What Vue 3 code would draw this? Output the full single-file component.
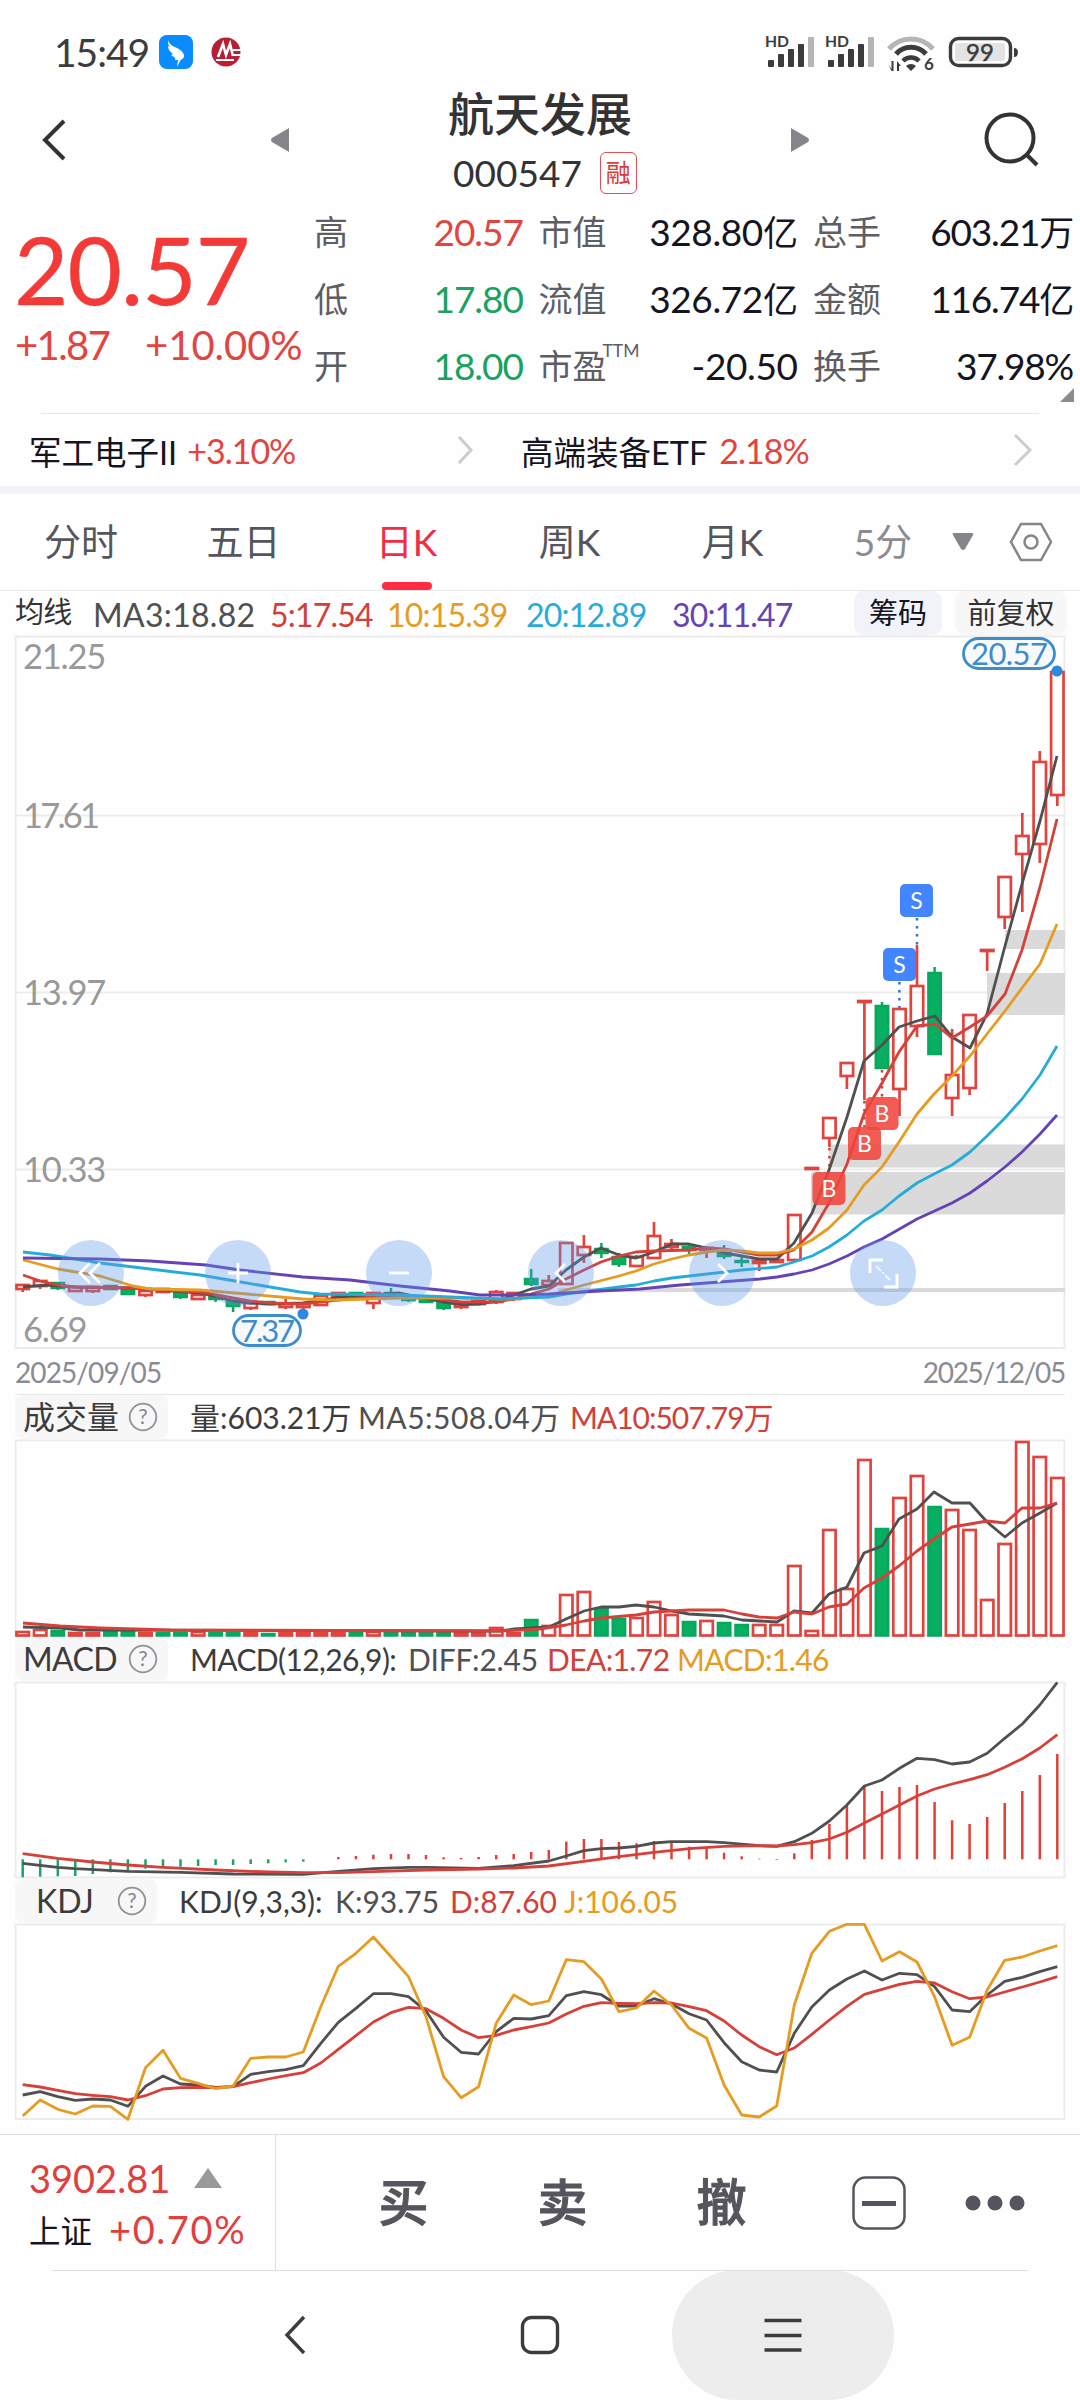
<script setup>
const quotes = [
  { label: "高", value: "20.57", tone: "up" },
  { label: "市值", value: "328.80", unit: "亿" },
  { label: "总手", value: "603.21", unit: "万", tight: true },
  { label: "低", value: "17.80", tone: "down", tight: true },
  { label: "流值", value: "326.72", unit: "亿" },
  { label: "金额", value: "116.74", unit: "亿", tight: true },
  { label: "开", value: "18.00", tone: "down" },
  { label: "市盈", sup: "TTM", value: "-20.50" },
  { label: "换手", value: "37.98%", tight: true }
];

const tabs = ["分时", "五日", "日K", "周K", "月K"];

// x position of the nth trading day
const cx = (i) => +(22.7 + i * 17.536).toFixed(1);

// [x, y] pairs to a polyline
const line = (pts) => pts.map(([x, y]) => `${x},${y}`).join(" ");
const series = (ys) => ys.map((y, i) => `${cx(i)},${y}`).join(" ");
const scaled = (pts, base) =>
  pts.map(([i, y]) => `${cx(i)},${(base + y / 3).toFixed(1)}`).join(" ");

// high, body top, body bottom, low, color
const candles = [
  [1285, 1285, 1289, 1292, "r"], [1281, 1281, 1286, 1289, "r"], [1282, 1283, 1288, 1290, "g"],
  [1287, 1287, 1291, 1292, "r"], [1287, 1287, 1291, 1293, "r"], [1285, 1286, 1289, 1289, "g"],
  [1290, 1290, 1294, 1295, "g"], [1291, 1291, 1295, 1297, "r"], [1289, 1289, 1292, 1292, "r"],
  [1293, 1293, 1297, 1299, "g"], [1295, 1295, 1299, 1300, "r"], [1296, 1296, 1299, 1302, "g"],
  [1301, 1301, 1306, 1312, "g"], [1303, 1303, 1308, 1310, "r"], [1301, 1302, 1304, 1304, "g"],
  [1299, 1304, 1307, 1309, "r"], [1303, 1304, 1307, 1310, "r"], [1296, 1296, 1305, 1305, "r"],
  [1293, 1293, 1296, 1296, "r"], [1292, 1293, 1296, 1296, "g"], [1293, 1293, 1303, 1309, "r"],
  [1288, 1293, 1296, 1297, "g"], [1296, 1297, 1300, 1302, "g"], [1298, 1298, 1302, 1303, "g"],
  [1302, 1302, 1308, 1310, "g"], [1303, 1304, 1307, 1309, "r"], [1300, 1301, 1304, 1304, "r"],
  [1290, 1292, 1302, 1304, "r"], [1292, 1293, 1299, 1301, "r"], [1269, 1279, 1284, 1286, "g"],
  [1275, 1281, 1285, 1286, "r"], [1242, 1243, 1284, 1284, "r"], [1235, 1247, 1255, 1263, "r"],
  [1243, 1249, 1253, 1258, "g"], [1253, 1257, 1264, 1267, "g"], [1255, 1257, 1266, 1266, "r"],
  [1222, 1236, 1258, 1258, "r"], [1239, 1244, 1247, 1250, "r"], [1245, 1247, 1250, 1254, "g"],
  [1247, 1248, 1250, 1258, "r"], [1245, 1253, 1256, 1259, "g"], [1257, 1261, 1262, 1267, "g"],
  [1259, 1261, 1263, 1271, "r"], [1259, 1260, 1262, 1263, "r"], [1214, 1215, 1260, 1260, "r"],
  [1168, 1168, 1169, 1169, "r"], [1118, 1118, 1138, 1147, "r"], [1062, 1063, 1076, 1089, "r"],
  [1001, 1001, 1002, 1100, "r"], [1002, 1006, 1068, 1069, "g"], [1008, 1009, 1089, 1116, "r"],
  [945, 986, 1026, 1037, "r"], [967, 973, 1054, 1055, "g"], [1029, 1075, 1098, 1116, "r"],
  [1015, 1015, 1088, 1095, "r"], [949, 950, 951, 971, "r"], [876, 877, 917, 929, "r"],
  [813, 836, 854, 912, "r"], [751, 762, 844, 863, "r"], [671, 672, 795, 806, "r"]
];

const gaps = [
  [1005, 930, 19],
  [987, 973, 42],
  [829, 1144.5, 23],
  [811, 1172, 42.5],
  [558, 1288, 4]
];

const ma3 = [
  [23, 1287], [46, 1285], [75, 1287], [133, 1288], [200, 1293], [217, 1297], [233, 1301], [250, 1303],
  [270, 1304], [303, 1303], [320, 1301], [338, 1297], [373, 1295], [400, 1293], [423, 1298], [443, 1302],
  [461, 1304.5], [479, 1304], [496, 1301], [514, 1295], [531, 1289], [549, 1286], [566, 1270], [584, 1257],
  [601, 1248], [619, 1255], [636, 1258], [654, 1252], [672, 1244], [689, 1244], [707, 1248], [724, 1253],
  [742, 1256], [759, 1259], [777, 1259], [794, 1243], [812, 1213], [829, 1170], [847, 1117], [864, 1061],
  [882, 1045], [899, 1027], [917, 1021], [935, 1016], [952, 1037], [970, 1048], [987, 1014], [1005, 946],
  [1022, 884], [1040, 821], [1057, 756]
];
const ma5 = [
  [23, 1275], [40, 1281], [58, 1285], [75, 1287], [133, 1288], [200, 1292], [233, 1298], [250, 1301],
  [270, 1303], [303, 1304], [320, 1302], [338, 1300], [373, 1297], [400, 1295], [423, 1297], [461, 1302],
  [496, 1302], [514, 1299], [531, 1294], [549, 1289], [566, 1279], [584, 1270], [601, 1262], [619, 1256],
  [636, 1252], [654, 1251], [689, 1250], [707, 1248], [724, 1249], [742, 1252], [759, 1255], [777, 1255],
  [794, 1250], [812, 1232], [829, 1203], [847, 1164], [864, 1114], [882, 1083], [899, 1052], [917, 1026],
  [935, 1024], [952, 1038], [970, 1027], [987, 1016], [1005, 994], [1022, 950], [1040, 887], [1057, 819]
];
const ma10 = [
  [23, 1260], [58, 1269], [100, 1276], [133, 1286], [150, 1289], [200, 1290], [247, 1294], [303, 1299],
  [335, 1300], [400, 1298], [450, 1298], [510, 1299], [549, 1296], [566, 1290], [584, 1285], [619, 1276],
  [636, 1271], [654, 1264], [672, 1259], [689, 1255], [707, 1252], [724, 1250], [742, 1251], [759, 1253],
  [777, 1253], [794, 1249], [812, 1240], [829, 1228], [847, 1210], [864, 1185], [882, 1167], [899, 1142],
  [917, 1114], [934, 1094], [952, 1076], [970, 1056], [987, 1034], [1005, 1011], [1022, 988], [1040, 964],
  [1057, 924]
];
const ma20 = [
  [23, 1252], [50, 1255], [100, 1263], [150, 1269], [200, 1275], [235, 1281], [270, 1287], [300, 1292],
  [320, 1294], [400, 1295], [450, 1297], [500, 1299], [549, 1297], [566, 1294], [619, 1287], [636, 1285],
  [654, 1281], [672, 1278], [707, 1274], [742, 1270], [777, 1267], [794, 1262], [812, 1256], [829, 1247],
  [847, 1235], [864, 1221], [882, 1210], [899, 1196], [917, 1183], [934, 1174], [952, 1165], [970, 1152],
  [987, 1136], [1005, 1118], [1022, 1099], [1040, 1075], [1057, 1046]
];
const ma30 = [
  [23, 1258], [100, 1259], [150, 1261], [206, 1265], [240, 1270], [303, 1277], [350, 1280], [400, 1286],
  [450, 1291], [480, 1295], [510, 1295], [549, 1294], [600, 1291], [640, 1289], [680, 1285], [720, 1282],
  [760, 1279], [777, 1277], [794, 1274], [812, 1270], [829, 1264], [847, 1256], [864, 1247], [882, 1239],
  [917, 1219], [952, 1203], [970, 1193], [987, 1181], [1005, 1167], [1022, 1152], [1040, 1134], [1057, 1115]
];

const trades = [
  { x: 900, y: 884, t: "S" },
  { x: 883, y: 948, t: "S" },
  { x: 848, y: 1127, t: "B" },
  { x: 865.5, y: 1097, t: "B" },
  { x: 812.5, y: 1172, t: "B" }
];

const tools = [
  { x: 91, d: "M-1-10l-10 10l10 10M9-10l-10 10l10 10" },
  { x: 238, d: "M-10 0h20M0-10v20" },
  { x: 399, d: "M-10 0h20" },
  { x: 561, d: "M4-9l-9 9l9 9" },
  { x: 722, d: "M-4-9l9 9l-9 9" },
  { x: 883, d: "M-13 0v-13h13M14 1v13h-13" }
];

// volume bars: color and top edge of each
const volColors = "rrgrrggrggrggrgrrrrgrggggrrrrgrrrggrrrgrggrrrrrrrgrrgrrrrrrr";
const volTops = [
  1631, 1629, 1630, 1632, 1632, 1631, 1631, 1632, 1632, 1632, 1631, 1632, 1632, 1632, 1633, 1632, 1632,
  1632, 1632, 1632, 1631, 1632, 1632, 1632, 1632, 1632, 1632, 1627, 1632, 1619, 1625, 1594, 1591, 1608,
  1618, 1617, 1601, 1614, 1621, 1620, 1622, 1624, 1624, 1624, 1565, 1630, 1529, 1588, 1459, 1528, 1497,
  1475, 1506, 1509, 1529, 1599, 1543, 1441, 1456, 1477
];
const vma5 = [
  [23, 1627], [60, 1628], [80, 1630], [500, 1631], [514, 1629], [531, 1628], [549, 1627], [566, 1619],
  [584, 1611], [601, 1607], [619, 1607], [636, 1605], [654, 1607], [672, 1611], [689, 1614], [724, 1616],
  [742, 1620], [777, 1622], [794, 1611], [812, 1613], [829, 1594], [847, 1587], [864, 1553], [882, 1546],
  [899, 1519], [917, 1509], [934, 1492], [952, 1503], [970, 1503], [987, 1522], [1005, 1537], [1022, 1523],
  [1040, 1513], [1057, 1503]
];
const vma10 = [
  [23, 1623], [60, 1626], [100, 1628], [170, 1630], [500, 1631], [540, 1629], [566, 1625], [584, 1621],
  [601, 1618], [636, 1615], [654, 1612], [689, 1610], [724, 1610], [742, 1614], [759, 1617], [777, 1618],
  [794, 1612], [812, 1614], [829, 1607], [847, 1604], [864, 1588], [882, 1578], [899, 1566], [917, 1551],
  [934, 1539], [952, 1527], [970, 1524], [987, 1521], [1005, 1523], [1022, 1508], [1040, 1508], [1057, 1503]
];

// macd, thirds of a pixel from 1640
const diff = [
  [0, 670], [1, 676], [2, 682], [3, 686], [6, 694], [9, 697], [12, 702], [16, 703], [18, 694], [20, 686],
  [22, 682], [23, 682], [26, 685], [28, 677], [30, 663], [31, 648], [32, 632], [33, 626], [34, 624],
  [35, 619], [36, 609], [37, 605], [39, 605], [40, 608], [42, 617], [43, 619], [44, 605], [45, 580],
  [46, 543], [47, 495], [48, 438], [49, 420], [50, 385], [51, 355], [52, 359], [53, 372], [54, 366],
  [55, 340], [56, 295], [57, 252], [58, 195], [59, 127]
];
const dea = [
  [0, 641], [2, 655], [4, 666], [6, 675], [8, 682], [11, 690], [14, 696], [16, 698], [18, 698], [20, 695],
  [23, 690], [26, 687], [28, 684], [30, 678], [32, 664], [34, 650], [36, 637], [38, 626], [40, 619],
  [42, 617], [43, 618], [44, 614], [45, 608], [46, 597], [47, 577], [48, 549], [49, 522], [50, 495],
  [51, 468], [52, 447], [53, 432], [54, 419], [55, 404], [56, 382], [57, 356], [58, 324], [59, 284]
];
const hist = [
  712, 710, 709, 708, 702, 697, 693, 686, 683, 680, 678, 675, 675, 672, 670, 667, 665, 658, 651, 648, 644,
  642, 642, 645, 652, 654, 651, 645, 642, 636, 630, 605, 597, 597, 606, 610, 603, 608, 620, 626, 638, 649,
  656, 660, 640, 600, 552, 497, 440, 453, 441, 435, 486, 541, 552, 531, 489, 453, 405, 342
];

const kdj = (vals) => series(vals.map((v) => (1880 + v / 3).toFixed(1)));
const kLine = kdj([
  645, 635, 650, 661, 657, 660, 679, 619, 588, 612, 615, 622, 620, 583, 575, 569, 557, 490, 427, 385, 341,
  341, 350, 393, 472, 517, 522, 455, 415, 417, 407, 347, 335, 344, 378, 378, 356, 372, 401, 420, 488, 545,
  570, 576, 460, 381, 330, 297, 273, 300, 280, 284, 320, 390, 395, 345, 304, 292, 275, 260
]);
const dLine = kdj([
  614, 621, 631, 641, 646, 650, 660, 647, 627, 623, 622, 623, 620, 608, 597, 587, 578, 549, 508, 467, 426,
  398, 382, 386, 415, 450, 473, 466, 450, 440, 429, 402, 379, 368, 370, 371, 368, 369, 380, 392, 423, 465,
  500, 524, 504, 463, 420, 379, 343, 328, 313, 304, 309, 335, 356, 351, 336, 321, 306, 290
]);
const jLine = kdj([
  708, 660, 688, 702, 678, 679, 718, 563, 511, 595, 610, 626, 618, 535, 531, 531, 516, 380, 259, 220, 171,
  230, 290, 410, 590, 653, 620, 430, 345, 374, 363, 239, 245, 297, 395, 384, 333, 375, 445, 474, 615, 705,
  711, 678, 375, 220, 154, 133, 133, 243, 215, 246, 350, 496, 472, 330, 241, 231, 213, 197
]);
</script>

<template>
  <div class="app">
    <!-- status bar -->
    <div class="status">
      <span class="clock">15:49</span>
      <svg class="ding" width="34" height="34" viewBox="0 0 34 34">
        <rect width="34" height="34" rx="8" fill="#0a8cff" />
        <path d="M9 5c1 4 4 6 9 8c5 3 7 5 7 8c0 3-3 3-4 5l-3 6l1-7h-3c1-2 0-2-1-3l-3-2l2-1c-3-2-5-5-5-8l2 1c-2-2-2-4-2-7z" fill="#fff" />
      </svg>
      <svg class="cmb" width="30" height="32" viewBox="0 0 30 32">
        <circle cx="15" cy="16" r="14.5" fill="#b71f35" />
        <path d="M7 21L12 8l3 11l4-11l3 12" fill="none" stroke="#fff" stroke-width="2.6" />
        <path d="M5 24h18M22 14h8M23 19h7" stroke="#fff" stroke-width="2" />
      </svg>
      <svg class="signals" width="260" height="40" viewBox="762 32 260 40">
        <g v-for="n in [0, 60]" :key="n" :transform="`translate(${n} 0)`" fill="#3c3c3c">
          <text x="765" y="47" class="hd" textLength="24" lengthAdjust="spacingAndGlyphs">HD</text>
          <rect x="768" y="60" width="6" height="7" rx="1" />
          <rect x="778" y="54" width="6" height="13" rx="1" />
          <rect x="788" y="49" width="6" height="18" rx="1" />
          <rect x="798" y="44" width="6" height="23" rx="1" />
          <rect x="808" y="37" width="6" height="30" rx="1" fill="#b5b5b5" />
        </g>
        <g fill="none" stroke="#3c3c3c" stroke-width="5">
          <path d="M889 49a29 29 0 0 1 44 0" stroke="#b5b5b5" />
          <path d="M896 54a20 20 0 0 1 30 0" />
          <path d="M903 61a11 11 0 0 1 16 0" stroke-width="4.5" />
        </g>
        <path d="M911 71l-5-5a7 7 0 0 1 10 0zM888.5 65l3 4v-8h2v10h-2zM897 71V61l4 5h-2v5z" fill="#3c3c3c" />
        <text x="924" y="70" class="six">6</text>
        <rect x="950.5" y="38.5" width="60" height="27" rx="8" fill="none" stroke="#3c3c3c" stroke-width="3.4" />
        <rect x="955" y="43" width="50" height="18" rx="3" fill="#e3e3e3" />
        <path d="M1014 48q4 0 4 4.500t-4 4.500z" fill="#3c3c3c" />
        <text x="966" y="61" class="pct" textLength="28">99</text>
      </svg>
    </div>

    <!-- title -->
    <header class="head">
      <svg class="back" width="30" height="44" viewBox="0 0 30 44"><path d="M24 3L5 22l19 19" /></svg>
      <svg class="prev" width="20" height="26" viewBox="0 0 20 26"><path d="M19 1v24L2 15q-2-2 0-4z" /></svg>
      <div class="title">
        <h1>航天发展</h1>
        <div class="code"><span>000547</span><i>融</i></div>
      </div>
      <svg class="next" width="20" height="26" viewBox="0 0 20 26"><path d="M1 1v24L18 15q2-2 0-4z" /></svg>
      <svg class="search" width="60" height="60" viewBox="0 0 60 60">
        <circle cx="27" cy="27" r="23.5" /><path d="M43 43l11 11" />
      </svg>
    </header>

    <!-- quote -->
    <section class="quote">
      <div class="price">
        <strong>20.57</strong>
        <div class="change"><span>+1.87</span><span>+10.00%</span></div>
      </div>
      <div class="figures">
        <div v-for="q in quotes" :key="q.label" class="figure">
          <span class="k">{{ q.label }}<sup v-if="q.sup">{{ q.sup }}</sup></span>
          <span class="v" :class="[q.tone, { tight: q.tight }]">{{ q.value }}<em v-if="q.unit">{{ q.unit }}</em></span>
        </div>
      </div>
      <svg class="corner" width="14" height="14" viewBox="0 0 14 14"><path d="M14 0v14H0z" fill="#8b8b90" /></svg>
    </section>

    <section class="related">
      <div><span>军工电子II</span><b>+3.10%</b>
        <svg width="20" height="32" viewBox="0 0 20 32"><path d="M3 3l12 13L3 29" /></svg>
      </div>
      <div><span>高端装备ETF</span><b>2.18%</b>
        <svg width="20" height="32" viewBox="0 0 20 32"><path d="M2 1l15 15L2 31" /></svg>
      </div>
    </section>

    <nav class="tabs">
      <span v-for="t in tabs" :key="t" :class="{ on: t === '日K' }">{{ t }}</span>
      <span class="more">5分</span>
      <svg width="22" height="18" viewBox="0 0 22 18"><path d="M2 0h18q2 0 1 2l-8 14q-2 2-4 0L1 2q-1-2 1-2z" fill="#85858c" /></svg>
      <svg class="gear" width="44" height="40" viewBox="0 0 44 40">
        <path d="M12 2h20L42 20L32 38H12L2 20z" /><circle cx="22" cy="20" r="6.5" />
      </svg>
    </nav>

    <div class="averages">
      <span class="name">均线</span>
      <span class="dark">MA3:18.82</span>
      <span class="red">5:17.54</span>
      <span class="orange">10:15.39</span>
      <span class="cyan">20:12.89</span>
      <span class="purple">30:11.47</span>
      <button class="chips">筹码</button>
      <button>前复权</button>
    </div>

    <!-- candles -->
    <svg class="chart" width="1080" height="714" viewBox="0 636 1080 714">
      <rect class="frame" x="15.5" y="636.5" width="1049" height="711.5" />
      <path class="frame" d="M15 815.500H1065M15 992.500H1065M15 1169.500H1065M899 1117.500H1065" />
      <rect v-for="g in gaps" :key="g[0]" :x="g[0]" :y="g[1]" :width="1065 - g[0]" :height="g[2]" fill="#dadada" />
      <g class="axis">
        <text x="23" y="669">21.25</text>
        <text x="23" y="828" class="narrow">17.61</text>
        <text x="23" y="1005">13.97</text>
        <text x="23" y="1182">10.33</text>
        <text x="23" y="1342">6.69</text>
      </g>
      <g v-for="(c, i) in candles" :key="i" :class="c[4] === 'g' ? 'green' : 'hollow'">
        <path :d="`M${cx(i)} ${c[0]}V${c[1]}M${cx(i)} ${c[2]}V${c[3]}`" />
        <rect :x="cx(i) - 6.2" :y="c[1]" width="12.4" :height="Math.max(c[2] - c[1], 0.5)" />
      </g>
      <path d="M829.400 1148V1172M864.400 1101V1127M882 1070V1097" class="dots buy" />
      <path d="M899.400 982V1008M917 918V945" class="dots" />
      <polyline :points="line(ma3)" class="ln dk" />
      <polyline :points="line(ma5)" class="ln rd" />
      <polyline :points="line(ma10)" class="ln or" />
      <polyline :points="line(ma20)" class="ln cy" />
      <polyline :points="line(ma30)" class="ln pu" />
      <g v-for="(t, i) in trades" :key="i" class="badge">
        <rect :x="t.x" :y="t.y" width="33" height="33" rx="5" :fill="t.t === 'S' ? '#4285ff' : '#f0453c'" :opacity="t.t === 'S' ? 1 : 0.88" />
        <text :x="t.x + 16.5" :y="t.y + 25">{{ t.t }}</text>
      </g>
      <g v-for="t in tools" :key="t.x" :transform="`translate(${t.x} 1273)`" class="tool">
        <circle r="33" />
        <path :d="t.d" />
        <path v-if="t.x === 883" d="M-7-7L8 8" class="dash" />
      </g>
      <g class="bubble">
        <rect x="963.5" y="638.5" width="91" height="30" rx="15" />
        <text x="971" y="665" textLength="77">20.57</text>
        <circle cx="1057" cy="671" r="5.5" />
        <rect x="233.5" y="1315.5" width="67" height="30" rx="15" />
        <text x="240" y="1342" textLength="55">7.37</text>
        <circle cx="303" cy="1314" r="5.5" />
      </g>
    </svg>
    <div class="dates"><span>2025/09/05</span><span>2025/12/05</span></div>

    <!-- volume -->
    <div class="ind vol">
      <div class="chip"><span>成交量</span>
        <svg width="30" height="30" viewBox="0 0 30 30"><circle cx="15" cy="15" r="13.3" /><text x="15" y="22">?</text></svg>
      </div>
      <span>量:603.21万</span><span class="dark">MA5:508.04万</span><span class="red">MA10:507.79万</span>
    </div>
    <svg class="chart" width="1080" height="197" viewBox="0 1440 1080 197">
      <rect class="frame" x="15.5" y="1440.5" width="1049" height="195" />
      <rect
        v-for="(top, i) in volTops" :key="i" :class="volColors[i] === 'g' ? 'green' : 'hollow'"
        :x="cx(i) - 6.2" :y="top + 1" width="12.4" :height="1634.5 - top"
      />
      <polyline :points="line(vma5)" class="ln dk" />
      <polyline :points="line(vma10)" class="ln rd" />
    </svg>

    <!-- macd -->
    <div class="ind macd">
      <div class="chip"><span>MACD</span>
        <svg width="30" height="30" viewBox="0 0 30 30"><circle cx="15" cy="15" r="13.3" /><text x="15" y="22">?</text></svg>
      </div>
      <span>MACD(12,26,9):</span><span class="dark">DIFF:2.45</span><span class="red">DEA:1.72</span><span class="orange">MACD:1.46</span>
    </div>
    <svg class="chart" width="1080" height="198" viewBox="0 1681 1080 198">
      <rect class="frame" x="15.5" y="1682.5" width="1049" height="195" />
      <path
        v-for="(h, i) in hist" :key="i" :d="`M${cx(i)} 1859.3V${(1640 + h / 3).toFixed(1)}`"
        :stroke="h > 658 ? '#17a765' : '#e0403a'" stroke-width="2.5"
      />
      <polyline :points="scaled(diff, 1640)" class="ln dk" />
      <polyline :points="scaled(dea, 1640)" class="ln rd" />
    </svg>

    <!-- kdj -->
    <div class="ind kdj">
      <div class="chip"><span>KDJ</span>
        <svg width="30" height="30" viewBox="0 0 30 30"><circle cx="15" cy="15" r="13.3" /><text x="15" y="22">?</text></svg>
      </div>
      <span>KDJ(9,3,3):</span><span class="dark">K:93.75</span><span class="red">D:87.60</span><span class="orange">J:106.05</span>
    </div>
    <svg class="chart" width="1080" height="211" viewBox="0 1923 1080 211">
      <rect class="frame" x="15.5" y="1924.5" width="1049" height="194.5" />
      <polyline :points="kLine" class="ln dk" />
      <polyline :points="dLine" class="ln rd" />
      <polyline :points="jLine" class="ln or" />
    </svg>

    <!-- actions -->
    <footer class="actions">
      <div class="index">
        <div class="row"><span class="num">3902.81</span>
          <svg width="28" height="20" viewBox="0 0 28 20"><path d="M14 0L28 20H0z" fill="#999" /></svg>
        </div>
        <div class="row"><span class="mkt">上证</span><span class="num wide">+0.70%</span></div>
      </div>
      <b>买</b><b>卖</b><b>撤</b>
      <svg class="minus" width="56" height="56" viewBox="0 0 56 56">
        <rect x="2.5" y="2.5" width="51" height="51" rx="12" /><path d="M11 28.500h34" />
      </svg>
      <svg class="dots3" width="60" height="16" viewBox="0 0 60 16">
        <circle cx="8" cy="8" r="7.5" /><circle cx="30" cy="8" r="7.5" /><circle cx="52" cy="8" r="7.5" />
      </svg>
    </footer>

    <div class="sysnav">
      <svg width="24" height="40" viewBox="0 0 24 40"><path d="M20 2L3 20l17 18" /></svg>
      <svg width="40" height="40" viewBox="0 0 40 40"><rect x="2.5" y="2.5" width="35" height="35" rx="9" /></svg>
      <div class="pill">
        <svg width="40" height="40" viewBox="0 0 40 40"><path d="M1.500 5.500h37M1.500 20.500h37M1.500 35h37" /></svg>
      </div>
    </div>
  </div>
</template>

<style>
body {
  background: #fff;
}
</style>

<style scoped>
.app {
  width: 1080px;
  height: 2400px;
  overflow: hidden;
  display: flex;
  flex-direction: column;
  background: #fefefe;
  color: #333;
  font-family: Lato, "Noto Sans CJK SC", sans-serif;
}

.app > * {
  flex: none;
}

svg {
  display: block;
  overflow: visible;
}

.status {
  height: 90px;
  display: flex;
  padding-left: 54px;
}

.clock {
  width: 105px;
  font-size: 39px;
  line-height: 104px;
  letter-spacing: -1px;
  color: #3c3c3c;
}

.ding {
  margin-top: 35px;
}

.cmb {
  margin: 36px 0 0 18px;
}

.signals {
  margin: 32px 0 0 521px;
}

.hd {
  font-size: 15px;
  font-weight: 700;
}

.six {
  font-size: 17px;
  font-weight: 700;
  fill: #3c3c3c;
}

.pct {
  font-size: 24px;
  fill: #3c3c3c;
  stroke: #3c3c3c;
  stroke-width: 0.5;
}

.head {
  height: 110px;
  display: flex;
}

.head svg {
  fill: none;
  stroke: #333;
  stroke-width: 4;
}

.head .prev,
.head .next {
  fill: #85858c;
  stroke: none;
  margin-top: 37px;
}

.back {
  margin: 28px 0 0 40px;
}

.head .prev {
  margin-left: 200px;
}

.title {
  width: 500px;
  text-align: center;
}

.title h1 {
  margin: -1px 0 0;
  font-size: 46px;
  font-weight: 500;
  line-height: 50px;
}

.code {
  display: flex;
  justify-content: center;
  align-items: center;
  gap: 18px;
  margin-top: 12px;
  padding-left: 10px;
  font-size: 37px;
  line-height: 44px;
}

.code i {
  box-sizing: border-box;
  width: 37px;
  height: 42px;
  border: 1.5px solid #e05050;
  border-radius: 6px;
  font-size: 25px;
  line-height: 38px;
  font-style: normal;
  color: #dd3b36;
}

.head .search {
  margin: 21px 0 0 173px;
}

.quote {
  position: relative;
  height: 213px;
  display: flex;
}

.price {
  width: 314px;
  color: #f23b38;
}

.price strong {
  display: block;
  margin: 15px 0 0 14px;
  height: 110px;
  font-size: 94px;
  line-height: 108px;
  font-weight: 400;
  letter-spacing: -1px;
  -webkit-text-stroke: 0.4px #f23b38;
}

.change {
  display: flex;
  margin-left: 15px;
  font-size: 40px;
  line-height: 40px;
  letter-spacing: 0;
  color: #e04540;
}

.change span:first-child {
  width: 130px;
  letter-spacing: -1.6px;
}

.figures {
  width: 759px;
  display: grid;
  grid-template-columns: 209px 259px 260px;
  grid-auto-rows: 67px;
  column-gap: 15.5px;
}

.figure {
  display: flex;
  justify-content: space-between;
  line-height: 64px;
  white-space: nowrap;
}

.k {
  font-size: 34px;
  color: #5d5d64;
}

.k sup {
  margin-left: -4px;
  font-size: 17.5px;
  line-height: 0;
  vertical-align: 22px;
}

.v {
  font-size: 37px;
  color: #15151f;
  letter-spacing: -0.4px;
}

.v.tight {
  letter-spacing: -1.2px;
}

.v em {
  font-style: normal;
  font-size: 35px;
}

.v.up,
.v.down {
  letter-spacing: -1px;
}

.v.up {
  color: #e04540;
}

.v.down {
  color: #1aa262;
}

.corner {
  position: absolute;
  right: 6px;
  bottom: 11px;
}

.related {
  height: 72px;
  margin: 0 41px;
  border-top: 1px solid #e8e8e8;
  display: grid;
  grid-template-columns: 480px 518px;
}

.related div {
  display: flex;
  align-items: center;
  margin-left: -12px;
  font-size: 32.5px;
  color: #15151f;
}

.related div + div {
  margin-left: 0;
}

.related b {
  margin-left: 10px;
  font-weight: 400;
  font-size: 34px;
  letter-spacing: -1px;
  color: #e04540;
}

.related div + div b {
  margin-left: 12px;
}

.related svg {
  margin-left: auto;
  margin-right: 45px;
  fill: none;
  stroke: #ccc;
  stroke-width: 3;
}

.related div + div svg {
  margin-right: 6px;
}

.tabs {
  height: 96px;
  border-top: 8px solid #f2f3f8;
  border-bottom: 1px solid #e8e8e8;
  display: grid;
  grid-template-columns: 162px 163px 163px 163px 163px 138px 57px 71px;
  align-items: center;
  font-size: 37px;
  color: #55555c;
}

.tabs > span {
  height: 96px;
  line-height: 96px;
  text-align: center;
}

.tabs .on {
  color: #f02d44;
  display: flex;
  flex-direction: column;
  align-items: center;
}

.tabs .on::after {
  content: "";
  flex: none;
  width: 50px;
  height: 8px;
  margin-top: -8px;
  border-radius: 4px;
  background: #ff2b42;
}

.tabs .more {
  color: #8b8b92;
}

.gear {
  fill: none;
  stroke: #85858c;
  stroke-width: 2.5;
}

.averages {
  height: 45px;
  display: grid;
  grid-template-columns: 78px 177px 117px 139px 146px 182px 88px 112px;
  padding-left: 15px;
  line-height: 48px;
  font-size: 32px;
  letter-spacing: -0.8px;
  white-space: nowrap;
}

.averages .dark {
  letter-spacing: 0.3px;
}

.averages .name {
  font-size: 29px;
  line-height: 42px;
}

.averages button {
  height: 44px;
  padding: 0;
  border: 0;
  border-radius: 10px;
  background: #f7f7f7;
  font: 29px/42px Lato, "Noto Sans CJK SC", sans-serif;
  color: #333;
}

.averages button:last-child {
  margin-left: 13px;
  margin-right: -13px;
}

.averages .chips {
  background: #f1f3f9;
  color: #15151f;
}

.dark {
  color: #505050;
}

.red {
  color: #d0413a;
}

.orange {
  color: #e59c22;
}

.cyan {
  color: #27acd8;
}

.purple {
  color: #6443b4;
}

.frame {
  fill: none;
  stroke: #ececec;
  stroke-width: 2;
}

.axis {
  font-size: 34.5px;
  font-kerning: none;
  letter-spacing: -1.2px;
  fill: #999;
}

.axis .narrow {
  letter-spacing: -2.8px;
}

.hollow {
  fill: none;
  stroke: #e0443f;
  stroke-width: 2.7;
}

.green {
  fill: #07b061;
  stroke: #07a85e;
  stroke-width: 2.5;
}

.dots {
  fill: none;
  stroke: #3a6fd8;
  stroke-width: 2.5;
  stroke-dasharray: 2.5 5.5;
}

.buy {
  stroke: #c8443f;
}

.ln {
  fill: none;
  stroke-width: 2.8;
  stroke-linejoin: round;
}

.dk {
  stroke: #505050;
}

.rd {
  stroke: #d6403a;
}

.or {
  stroke: #e59c22;
}

.cy {
  stroke: #27acd8;
}

.pu {
  stroke: #6443b4;
}

.badge text {
  font-size: 23px;
  text-anchor: middle;
  fill: #fff;
}

.tool circle {
  fill: #5c98eb;
  opacity: 0.35;
}

.tool path {
  fill: none;
  stroke: #fff;
  stroke-width: 2.8;
}

.tool .dash {
  stroke-width: 1.5;
  stroke-dasharray: 7 2 2 2;
}

.bubble rect {
  fill: #f7f9fb;
  stroke: #3d8ccc;
  stroke-width: 2.8;
}

.bubble text {
  font-size: 31px;
  font-kerning: none;
  fill: #3d8ccc;
}

.bubble circle {
  fill: #2b8ade;
}

.dates {
  height: 44px;
  margin: 0 15px;
  border-bottom: 1px solid #e8e8e8;
  display: flex;
  justify-content: space-between;
  font-size: 28px;
  line-height: 44px;
  letter-spacing: -0.9px;
  color: #8b8b92;
}

.dates span:last-child {
  letter-spacing: -1.3px;
}

.ind {
  height: 44px;
  display: grid;
  padding-left: 15px;
  line-height: 44px;
  font-size: 30px;
  color: #3c3c3c;
  white-space: nowrap;
}

.vol {
  height: 45px;
  grid-template-columns: 175px 168px 212px auto;
}

.vol .dark {
  letter-spacing: 0.5px;
}

.vol .red {
  letter-spacing: -1px;
}

.macd {
  grid-template-columns: 175px 218px 139px 130px auto;
  letter-spacing: -0.6px;
}

.macd .dark {
  letter-spacing: -0.2px;
}

.kdj {
  grid-template-columns: 164px 156px 115px 114px auto;
}

.chip {
  width: 153px;
  height: 44px;
  box-sizing: border-box;
  padding: 0 10px 0 8px;
  display: flex;
  align-items: center;
  justify-content: space-between;
  border-radius: 8px;
  background: #f7f7f7;
  font-size: 32px;
}

.kdj .chip {
  width: 142px;
  padding-left: 21px;
}

.chip svg {
  fill: none;
  stroke: #919196;
  stroke-width: 1.8;
}

.chip svg text {
  stroke: none;
  fill: #85858a;
  font-size: 21px;
  letter-spacing: 0;
  text-anchor: middle;
}

.actions {
  height: 136px;
  border-top: 1px solid #dedede;
  box-sizing: border-box;
  display: flex;
  align-items: center;
}

.index {
  width: 276px;
  height: 135px;
  box-sizing: border-box;
  padding: 17px 0 0 29px;
  border-right: 1px solid #dedede;
}

.row {
  display: flex;
  align-items: center;
  height: 51px;
  font-size: 38px;
}

.num {
  color: #e0403d;
}

.wide {
  letter-spacing: 1.6px;
}

.row svg {
  margin-left: 24px;
}

.mkt {
  width: 80px;
  font-size: 31.5px;
  color: #15151f;
}

.actions b {
  width: 159px;
  margin-top: -7px;
  text-align: center;
  font-size: 50px;
  font-weight: 500;
  color: #55555d;
  -webkit-text-stroke: 1px #55555d;
}

.actions b:nth-of-type(1) {
  margin-left: 48px;
}

.minus {
  margin-left: 50px;
  fill: none;
  stroke: #55555d;
  stroke-width: 2.5;
}

.minus path {
  stroke-width: 5;
}

.dots3 {
  margin-left: 58px;
  fill: #55555d;
}

.sysnav {
  height: 130px;
  display: flex;
  align-items: center;
  position: relative;
  padding-left: 284px;
}

.sysnav::before {
  content: "";
  position: absolute;
  left: 52px;
  right: 52px;
  top: 0;
  height: 1px;
  background: #dedede;
}

.sysnav svg {
  fill: none;
  stroke: #3c3c3c;
  stroke-width: 3.4;
}

.sysnav > svg + svg {
  margin-left: 212px;
}

.pill {
  width: 222px;
  height: 130px;
  margin-left: 112px;
  display: flex;
  align-items: center;
  justify-content: center;
  border-radius: 65px;
  background: #ededed;
}
</style>
